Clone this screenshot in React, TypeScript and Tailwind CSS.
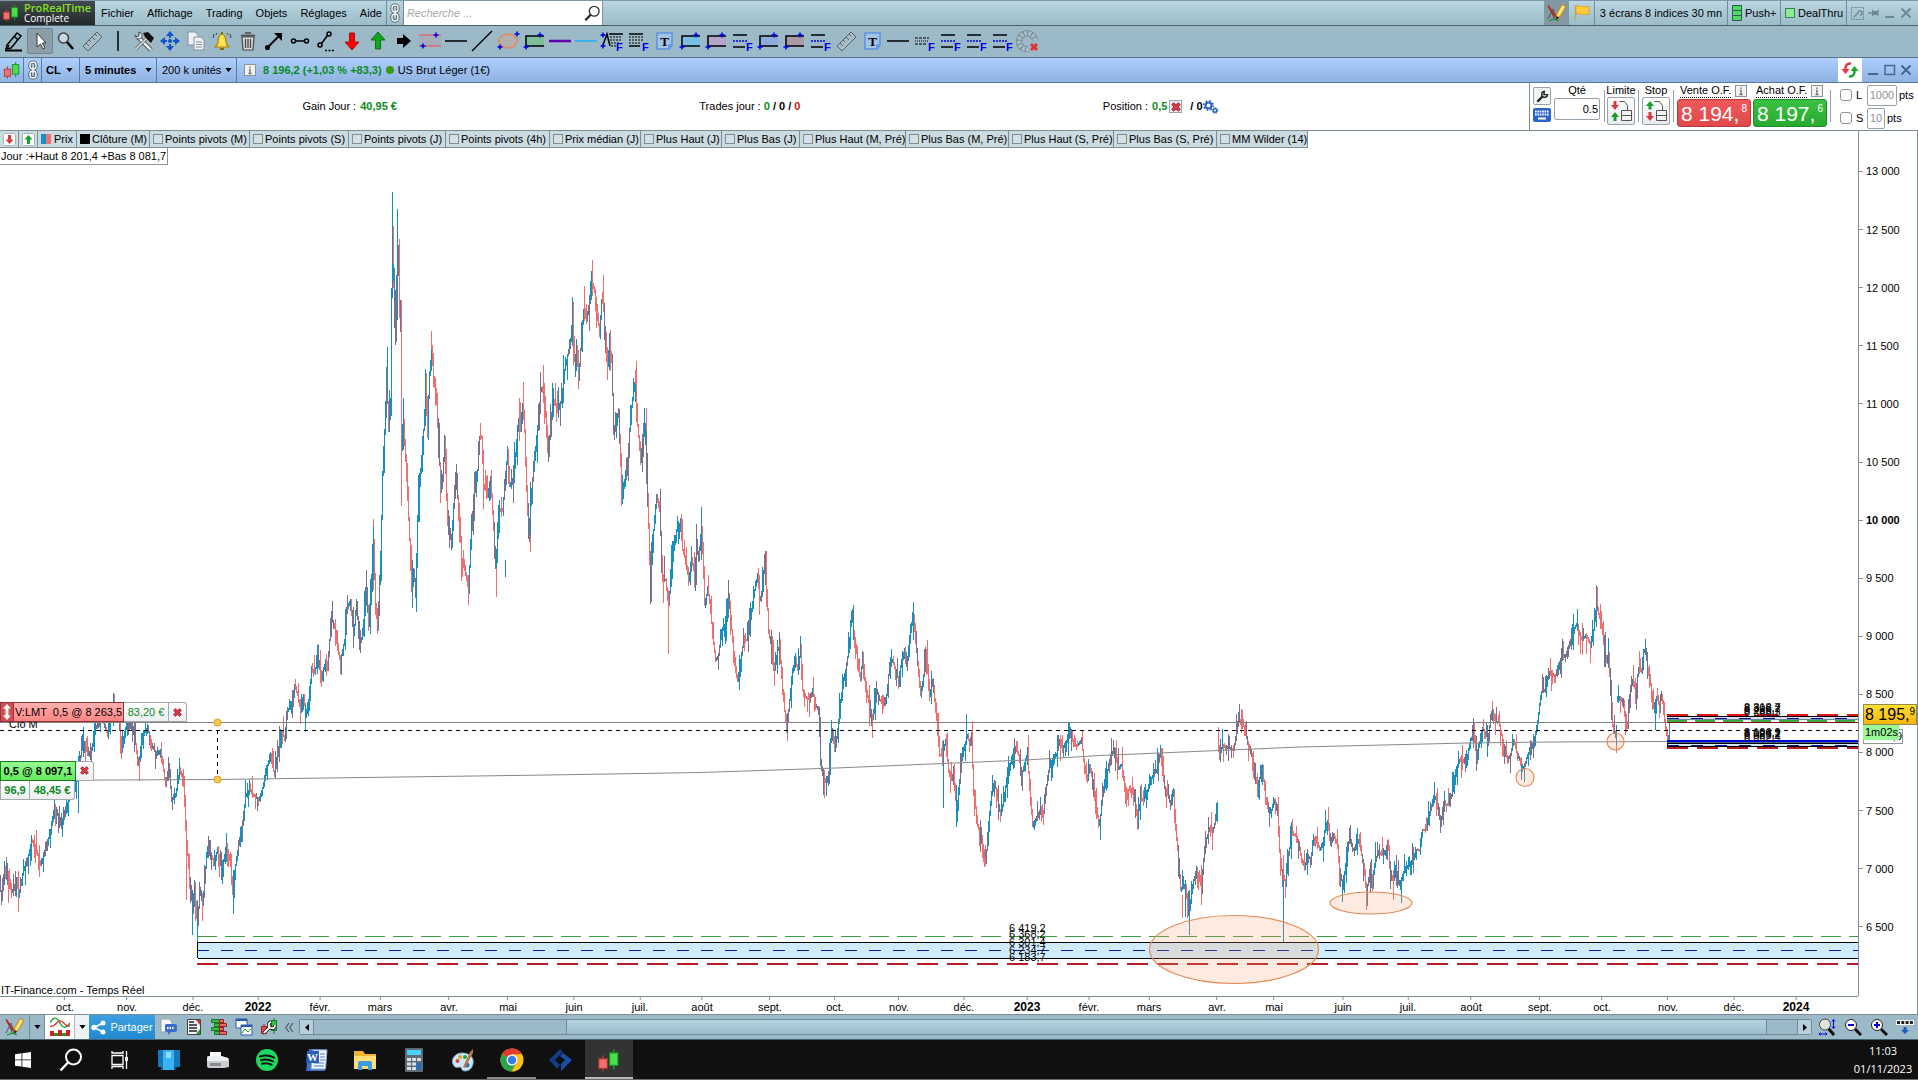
import React from "react";

/* ---------- price data: swing points in chart coordinates ---------- */
const SWINGS: number[][] = [
  [0,885,2,897,5,870,9,885,13,892,17,878,19,895,24,870,28,860,32,840,36,847,41,865,46,850,51,830,55,805,60,822,64,818,68,808,72,780,75,790,79,770,82,750,85,742,88,755,92,750,96,728,99,722,103,720,108,735,114,705,118,712,122,745,127,725,131,720,134,730,139,765,143,735,148,728,152,745,157,755,161,750,166,785,169,765,172,800,176,795,180,770,184,778,186,830,190,880,193,910,195,895,198,925,200,890,203,905,207,855,210,850,214,862,218,850,222,870,227,845,231,865,233,890,236,865,239,845,243,825,246,795,250,790,254,795,259,800,264,785,268,765,271,758,275,775,278,755,280,740,282,732,285,738,288,710,292,705,295,685,298,695,301,712,304,695,306,715,309,700,312,670,315,672,318,660,322,675,326,662,328,670,330,640,332,618,335,628,338,650,341,660,345,640,347,610,351,600,354,635,357,605,360,645,363,635,366,595,369,620,372,590,374,545,376,605,378,625,381,560,383,475,385,430,387,375,389,430,391,400,392,290,394,270,396,340,398,260,399,275,401,330,402,450,404,420,406,460,408,500,410,540,412,590,414,570,416,590,418,520,420,475,422,470,424,430,426,390,428,420,430,375,432,350,434,380,437,400,439,440,441,490,443,480,445,440,447,500,450,535,452,535,456,480,459,505,462,560,465,570,469,585,472,530,475,490,478,470,480,437,482,437,484,485,488,495,491,480,494,530,496,565,500,510,503,510,506,475,508,450,510,485,514,480,517,440,519,420,521,430,523,405,525,430,527,490,529,535,532,490,535,460,538,430,541,390,544,390,547,430,549,455,551,420,554,400,558,410,562,400,565,370,568,355,571,340,573,320,575,360,577,350,579,380,581,350,584,310,587,320,590,300,592,282,595,290,598,315,600,335,602,300,604,305,605,335,608,365,610,345,612,360,614,430,617,420,619,410,622,490,625,480,628,460,631,415,634,390,636,385,638,425,641,460,643,440,646,425,648,500,651,580,654,530,657,495,660,510,663,580,666,580,669,605,671,580,674,550,677,530,681,523,683,550,686,560,689,580,692,560,695,575,697,545,699,560,701,535,703,550,705,605,708,590,710,600,713,635,716,660,719,655,722,630,726,625,729,595,732,630,735,665,738,680,741,660,744,640,747,640,749,630,752,610,755,590,758,575,760,600,762,595,765,562,767,590,769,630,772,650,775,670,778,650,780,650,783,690,787,732,790,700,793,670,796,660,798,670,801,650,803,690,806,697,810,700,813,690,816,705,819,710,821,760,823,775,826,782,829,775,831,740,833,730,835,750,838,730,841,700,844,680,847,665,850,640,852,612,855,640,858,660,861,680,863,655,866,690,869,700,872,725,874,710,877,690,880,700,884,705,887,695,890,665,893,660,896,670,899,680,902,660,905,650,908,660,911,625,914,620,917,650,919,675,921,695,924,675,926,650,928,665,930,695,933,680,936,710,938,730,940,755,943,755,946,740,949,770,952,780,954,770,957,815,959,790,962,760,965,745,968,735,970,745,972,745,974,790,978,825,982,840,985,855,987,850,989,825,992,795,995,782,998,800,1001,815,1004,800,1007,780,1010,765,1013,760,1016,748,1019,755,1022,775,1026,760,1028,755,1030,790,1033,825,1036,820,1038,815,1041,810,1044,812,1047,785,1050,765,1053,760,1057,755,1060,740,1063,750,1066,742,1068,740,1071,730,1074,745,1078,745,1082,740,1085,770,1088,780,1090,765,1093,780,1096,800,1099,825,1101,815,1103,795,1106,775,1110,765,1112,755,1115,750,1119,768,1122,765,1126,790,1129,790,1132,790,1135,800,1138,815,1141,800,1144,800,1148,790,1151,780,1154,775,1157,770,1161,752,1163,765,1165,788,1168,792,1171,805,1174,790,1176,830,1179,860,1181,890,1184,885,1187,895,1189,915,1191,900,1194,880,1197,870,1200,880,1202,880,1204,860,1207,838,1210,828,1213,832,1216,820,1217,808],
  [1218,742,1220,753,1223,745,1227,748,1230,748,1234,750,1237,732,1239,720,1243,722,1246,735,1249,745,1252,755,1255,778,1258,785,1261,775,1263,770,1266,800,1269,812,1272,810,1275,800,1278,815,1280,850,1283,880,1286,880,1289,855,1292,835,1296,835,1299,845,1302,860,1305,868,1308,855,1311,860,1314,838,1317,840,1320,850,1323,845,1326,825,1328,822,1331,845,1334,835,1338,845,1340,870,1343,885,1346,865,1348,850,1350,835,1353,850,1356,848,1359,840,1362,855,1365,875,1367,892,1370,872,1373,880,1376,860,1379,852,1383,855,1387,850,1389,850,1391,875,1394,880,1397,872,1400,885,1402,880,1405,870,1409,865,1413,860,1417,850,1420,850,1423,830,1427,830,1430,812,1434,800,1436,797,1439,815,1442,818,1445,805,1449,805,1452,795,1456,770,1460,760,1464,762,1468,755,1471,740,1474,735,1477,755,1480,742,1483,728,1486,735,1489,735,1491,718,1493,710,1496,722,1499,722,1502,735,1505,750,1508,760,1511,755,1514,740,1517,752,1520,760,1522,770,1525,765,1528,755,1532,748,1535,737,1538,722,1540,705,1542,692,1546,690,1549,672,1553,675,1557,675,1560,665,1563,655,1566,655,1569,647,1571,640,1574,630,1577,624,1580,635,1583,640,1586,635,1588,638,1591,645,1594,630,1597,602,1599,614,1602,625,1605,650,1607,662,1609,655,1611,695,1613,725,1616,735],
  [1617,700,1620,697,1623,702,1626,718,1628,728,1630,695,1633,680,1636,692,1639,668,1642,672,1644,650,1646,650,1648,668,1651,685,1654,705,1657,698,1660,705,1662,695,1665,720,1667,735,1669,738],
];

/* single tall wicks: x, high, low, up(1) / down(0) */
const WICKS = [
  [392,192,298,1],[393,226,288,0],[397,209,320,1],[399,239,318,0],[401,300,506,0],[373,519,590,0],[387,347,390,1],[431,331,370,0],
  [412,560,608,1],[487,322,322,1],[496,560,597,0],[468,575,605,0],[505,560,577,1],[519,398,440,0],[543,365,400,0],[530,500,552,0],[573,303,330,0],
  [591,271,300,1],[603,275,312,0],[635,370,400,0],[621,470,506,0],[668,590,654,0],[646,408,430,0],[701,507,560,1],[766,551,580,0],
  [787,715,741,0],[824,770,798,0],[853,605,640,1],[872,715,738,0],[913,602,640,1],[943,740,808,1],[956,785,827,1],[966,714,745,1],[972,721,745,0],
  [985,845,866,0],[1028,735,760,0],[1100,820,840,1],[1182,895,918,0],[1185,880,917,1],[1189,890,935,1],[1217,802,822,1],[1201,870,905,0],
  [1283,880,943,1],[1283,855,882,0],[1285,880,898,0],[1342,880,902,1],[1366,885,905,0],[1393,870,900,0],[1401,880,903,1],[197,900,942,1],[192,890,935,1],
  [233,870,914,1],[186,820,900,0],[78,770,813,1],[114,694,715,0],[139,760,779,0],[305,705,732,1],[1492,701,715,0],[1521,765,780,1],[1524,768,782,1],
  [1577,609,630,1],[1597,587,605,0],[1616,725,745,1],[1645,639,655,1],[1655,700,730,1],[1669,729,741,1],[1487,725,757,1],
];

const noise = (n: number) => {
  const v = Math.sin(n * 127.1 + 311.7) * 43758.5453;
  return v - Math.floor(v);
};

function buildBars() {
  const paths = { up: "", down: "", mixed: "" };
  for (const run of SWINGS) {
    const level = (x: number) => {
      for (let i = 0; i + 3 < run.length; i += 2) {
        if (x <= run[i + 2]) {
          const t = (x - run[i]) / (run[i + 2] - run[i]);
          return run[i + 1] + (run[i + 3] - run[i + 1]) * t;
        }
      }
      return run[run.length - 1];
    };
    const last = run[run.length - 2];
    for (let x = run[0]; x <= last; x++) {
      const a = level(x);
      const b = level(Math.min(x + 1, last));
      const k = x > 365 && x < 700 ? 1.4 : 1;
      const r1 = noise(x);
      const r2 = noise(x + 5000);
      const top = Math.round(Math.min(a, b) - (1 + r1 * r1 * r1 * 17) * k);
      const low = Math.round(Math.max(a, b) + (1 + r2 * r2 * r2 * 17) * k);
      const pick = noise(Math.floor(x / 2) + 900);
      const key = pick < 0.28 ? "mixed" : b < a ? "up" : "down";
      paths[key] += `M${x + 0.5} ${top}V${low}`;
    }
  }
  for (const [x, t, l, up] of WICKS) paths[up ? "up" : "down"] += `M${x + 0.5} ${t}V${l}`;
  return paths;
}
const BARS = buildBars();

/* chart plane: 1858 x 865 units, first row at 131 */
const at = (x: number, y: number) => ({ left: `${(x / 1858) * 100}%`, top: `${((y - 131) / 865) * 100}%` });

/* ---------- small drawings ---------- */
type P = { children?: React.ReactNode };
const Ico = ({ children }: P) => (
  <svg viewBox="0 0 24 24" width="24" height="24" fill="none" stroke="#000" strokeWidth="1.5">{children}</svg>
);
const F = () => (
  <text x="16" y="22" fontSize="11" fontWeight="bold" fill="#0000e6" stroke="none" fontFamily="Liberation Sans, Arial, sans-serif">F</text>
);
const Plus = ({ x, y }: { x: number; y: number }) => <path d={`M${x - 2.5} ${y}h5M${x} ${y - 2.5}v5`} stroke="#0000e6" />;
const Ruler = () => (
  <Ico><path d="M3 17 17 3l5 5L8 22z" fill="#a9bcc6" stroke="#56646c" strokeWidth="1" /><path d="m6 14 3 3m0-6 2 2m1-5 3 3m0-6 2 2" stroke="#56646c" strokeWidth="1" /></Ico>
);
const Zone = ({ fill }: { fill: string }) => (
  <Ico><path d="M4 7h18v10H4z" fill={fill} stroke="none" /><path d="M22 7H4v10h18" /><Plus x={18} y={6} /><Plus x={4} y={18} /></Ico>
);
const Fib = () => (
  <Ico><path d="M3 6h14M3 18h12" /><path d="M3 12h14" stroke="#0000e6" strokeDasharray="2 1" /><F /></Ico>
);
const TextTool = () => (
  <Ico>
    <path d="M5 4h15v12l-3 4H5z" stroke="#5b93e0" fill="#a4c4e6" /><path d="M20 16h-3v4" stroke="#5b93e0" />
    <text x="12.500" y="17" textAnchor="middle" fontSize="13" fontWeight="bold" fill="#000" stroke="none" fontFamily="Liberation Serif, serif">T</text>
  </Ico>
);
const Candles = ({ s = 20 }: { s?: number }) => (
  <svg viewBox="0 0 20 20" width={s} height={s}>
    <path d="M14 1v17" stroke="#1c9a2a" strokeWidth="1.200" /><path d="M5 6v13.500" stroke="#b83a3a" strokeWidth="1.200" />
    <rect x="1.500" y="9" width="7" height="8" fill="#f07070" stroke="#a83a3a" /><rect x="10.500" y="4" width="7" height="10.500" fill="#4be04b" stroke="#1c8a2a" />
  </svg>
);
const Chain = () => (
  <svg viewBox="0 0 12 20" width="12" height="20" fill="none">
    <g stroke="#4b555b" strokeWidth="3.200"><rect x="3" y="2" width="6" height="7" rx="3" /><rect x="3" y="11" width="6" height="7" rx="3" /><path d="M6 6v8" /></g>
    <g stroke="#f4f7f8" strokeWidth="1.500"><rect x="3" y="2" width="6" height="7" rx="3" /><rect x="3" y="11" width="6" height="7" rx="3" /><path d="M6 6v8" /></g>
  </svg>
);
const Caret = () => <svg viewBox="0 0 8 5" width="7" height="4"><path d="M0 0h8L4 5z" fill="#000" /></svg>;
const PencilChart = () => (
  <svg viewBox="0 0 20 20" width="20" height="20" fill="none">
    <path d="M1 2 8 17M1 16l5-10 4 11" stroke="#4a5a60" strokeWidth="1" /><path d="m1.500 3 7 11" stroke="#d01818" strokeWidth="1.500" /><path d="m2 18 5-2 5 2" stroke="#1a9a2a" strokeWidth="1.200" />
    <path d="m9 16.500.5-5.500L15 1.500l4 2L13.500 13z" fill="#f8d04a" stroke="#b08018" strokeWidth=".8" /><path d="m11.500 12 5-9" stroke="#fff0a8" strokeWidth="1.200" /><path d="m9 17 .4-4 2.800 1.600z" fill="#222" />
  </svg>
);
const Cross = ({ s = 9 }: { s?: number }) => (
  <svg viewBox="0 0 10 10" width={s} height={s}><path d="m1.500 1.500 7 7m0-7-7 7" stroke="#8c1f28" strokeWidth="3.600" /><path d="m1.500 1.500 7 7m0-7-7 7" stroke="#d83c46" strokeWidth="2.400" /></svg>
);
const Info = () => (
  <svg viewBox="0 0 12 12" width="12" height="12"><rect x=".5" y=".5" width="11" height="11" fill="#f2f2ee" stroke="#8b9499" /><path d="M6 5v4M6 2.500v1.500M4.500 9.500h3M5 5.500h1" stroke="#6b7276" strokeWidth="1.300" /></svg>
);
const Wrench = () => (
  <svg viewBox="0 0 14 14" width="13" height="13" fill="none"><path d="M1.500 12.500 7 7" stroke="#222" strokeWidth="2.500" /><path d="M12.500 5A3.200 3.200 0 1 1 9 1.500L8.500 5z" stroke="#222" strokeWidth="1.500" /></svg>
);
const CloseX = ({ c }: { c: string }) => (
  <svg viewBox="0 0 12 12" width="12" height="12"><path d="m1.500 1.500 9 9m0-9-9 9" stroke={c} strokeWidth="2" /></svg>
);

const TOOLS: [string, React.ReactNode][] = [
  ["Dessiner", <Ico><path d="M5 16 15 4l4 3L9 19l-5 1z" /><path d="m12 7 4 4M5 20l2-4" /><path d="M3 21.500h17" strokeWidth="2" /></Ico>],
  ["Sélection", <Ico><path d="M9 4v14l3.500-3 2.500 5 2-1-2.500-5H18z" fill="#fff" stroke="#333" strokeWidth="1" /></Ico>],
  ["Loupe", <Ico><circle cx="9.500" cy="9" r="5" fill="#c7dae2" stroke="#444" /><path d="m13 13 6 7" strokeWidth="2.500" /></Ico>],
  ["Règle", <Ruler />],
  ["Séparateur", <Ico><path d="M12 2v20" /></Ico>],
  ["Outils", <Ico><path d="m6 8 13 13" stroke="#444" strokeWidth="4.500" /><path d="m6 8 13 13" stroke="#eef1f3" strokeWidth="2.500" /><path d="M3 6c0 4 4 5 6 3s1-5-2-6v4L5 8z" fill="#eef1f3" stroke="#444" strokeWidth="1" /><path d="M15 9 4 20" strokeWidth="3" stroke="#666" /><path d="M15 9 4 20" strokeWidth="1.500" stroke="#dfe4e6" /><path d="m11 4 5-1 6 6-3 5-6-6z" fill="#111" stroke="none" /></Ico>],
  ["Déplacer", <Ico><g fill="#0f55c8" stroke="none"><path d="m12 2 4 5H8zM12 22l4-5H8zM2 12l5-4v8zM22 12l-5-4v8z" /><circle cx="12" cy="12" r="2" /><path d="M11 7h2v2h-2zM11 15h2v2h-2zM7 11h2v2H7zM15 11h2v2h-2z" /></g></Ico>],
  ["Copier", <Ico><g fill="#eef2f5" stroke="#8492a2" strokeWidth="1"><path d="M4 3h7l3 3v10H4z" /><path d="M10 8h7l3 3v10H10z" /><path d="M12 13h6M12 15.500h6M12 18h6" /></g></Ico>],
  ["Alerte", <Ico><path d="M7 16c2-3 0-10 5-11 5 1 3 8 5 11l2 2H5z" fill="#ffe34a" stroke="#a88400" strokeWidth="1.200" /><path d="M10 20h4M12 5V3" stroke="#8a6c00" strokeWidth="2" /><path d="M4 5 3 9M20 5l1 4M7 4 6 6M17 4l1 2" stroke="#444" strokeWidth="1" /></Ico>],
  ["Supprimer", <Ico><path d="m6 8 1 13h10l1-13z" fill="#d5d8d5" stroke="#444" strokeWidth="1.200" /><path d="M5 6.500h14M9 4h6M9.500 10v9M12 10v9M14.500 10v9" stroke="#444" strokeWidth="1.300" /></Ico>],
  ["Flèche", <Ico><path d="m5 19 11-11" strokeWidth="2" /><path d="M20 4v8l-8-8z" fill="#000" stroke="none" /><circle cx="5.500" cy="18.500" r="1.800" fill="#000" /></Ico>],
  ["Segment", <Ico><circle cx="5.500" cy="12" r="2" /><circle cx="18.500" cy="12" r="2" /><path d="M7.500 12h9" /></Ico>],
  ["Segment oblique", <Ico><circle cx="6" cy="16" r="2" /><circle cx="15" cy="5" r="2" /><path d="m7.500 14.500 6-8" /><path d="M11 21.500h10" strokeDasharray="2 1.500" /></Ico>],
  ["Flèche rouge", <Ico><path d="M9.500 4h5v9H19l-7 8-7-8h4.500z" fill="#f00" stroke="#900" strokeWidth=".8" /></Ico>],
  ["Flèche verte", <Ico><path d="M9.500 20h5v-9H19l-7-8-7 8h4.500z" fill="#10a818" stroke="#075a0c" strokeWidth=".8" /></Ico>],
  ["Flèche noire", <Ico><path d="M5 9v6h6v4l8-7-8-7v4z" fill="#000" stroke="none" /></Ico>],
  ["Canal", <Ico><path d="M1 6h22v11H1z" fill="#a5adb8" stroke="none" /><path d="M1 6h22M1 17h22" stroke="#d86c70" /><Plus x={18} y={6} /><Plus x={5} y={17} /></Ico>],
  ["Horizontale", <Ico><path d="M1 12h22" /></Ico>],
  ["Droite", <Ico><path d="M2 22 22 2" /></Ico>],
  ["Ellipse", <Ico><ellipse cx="12" cy="12" rx="9" ry="7" fill="#b5b0ae" stroke="#e0895c" /><Plus x={21} y={5} /><Plus x={4} y={18} /></Ico>],
  ["Rectangle vert", <Zone fill="#7ebd9c" />],
  ["Ligne violette", <Ico><path d="M1 12h22" stroke="#6000a8" strokeWidth="2.500" /></Ico>],
  ["Ligne bleue", <Ico><path d="M1 12h22" stroke="#3cb0ec" strokeWidth="2" /></Ico>],
  ["Fourchette", <Ico><path d="M3 16 7 5l3 12" /><path d="M9 5h14" /><path d="M10 8h12M10 11h12M11 14h8M11 17h5" strokeWidth="1" strokeDasharray="2 1" /><Plus x={3} y={6} /><Plus x={3} y={17} /><F /></Ico>],
  ["Retracement", <Ico><path d="M3 5h14" /><path d="M3 8h14M3 11h14M3 14h12" strokeWidth="1" strokeDasharray="2 1" /><path d="M3 17h11" /><F /></Ico>],
  ["Texte", <TextTool />],
  ["Zone bleue", <Zone fill="#79bfe0" />],
  ["Zone mauve", <Zone fill="#b6a5c8" />],
  ["Fibonacci 1", <Fib />],
  ["Zone lavande", <Zone fill="#8facdd" />],
  ["Zone rose", <Zone fill="#aa9aa8" />],
  ["Fibonacci 2", <Fib />],
  ["Règle 2", <Ruler />],
  ["Texte 2", <TextTool />],
  ["Horizontale 2", <Ico><path d="M1 12h22" /></Ico>],
  ["Niveaux", <Ico><path d="M3 9h14M3 15h12" strokeWidth="1" strokeDasharray="3 1" /><path d="M3 12h14" strokeWidth="1" strokeDasharray="1 1" /><F /></Ico>],
  ["Fibonacci 3", <Fib />],
  ["Fibonacci 4", <Fib />],
  ["Fibonacci 5", <Fib />],
  ["Désactiver l'aimant", <Ico><path d="M13 20a8 8 0 1 1 6-9" stroke="#6f858f" strokeWidth="6" /><path d="M13 20a8 8 0 1 1 6-9" stroke="#a9c0ca" strokeWidth="4.500" strokeDasharray="3 1" /><path d="m15 15 6 6m0-6-6 6" stroke="#e03434" strokeWidth="3" /></Ico>],
];

const LEGEND = ["Points pivots (M)", "Points pivots (S)", "Points pivots (J)", "Points pivots (4h)", "Prix médian (J)", "Plus Haut (J)", "Plus Bas (J)", "Plus Haut (M, Pré)", "Plus Bas (M, Pré)", "Plus Haut (S, Pré)", "Plus Bas (S, Pré)", "MM Wilder (14)"];
const LEGEND_W = ["w-[100px]", "w-[99px]", "w-[97px]", "w-[104px]", "w-[91px]", "w-[81px]", "w-[78px]", "w-[106px]", "w-[103px]", "w-[105px]", "w-[103px]", "w-[90px]"];

const MONTHS: [number, string][] = [[65,"oct."],[127,"nov."],[193,"déc."],[258,"2022"],[320,"févr."],[380,"mars"],[449,"avr."],[508,"mai"],[574,"juin"],[640,"juil."],[702,"août"],[770,"sept."],[835,"oct."],[899,"nov."],[964,"déc."],[1027,"2023"],[1089,"févr."],[1149,"mars"],[1217,"avr."],[1274,"mai"],[1343,"juin"],[1408,"juil."],[1471,"août"],[1540,"sept."],[1602,"oct."],[1668,"nov."],[1734,"déc."],[1796,"2024"]];
const PRICES = ["13 000","12 500","12 000","11 500","11 000","10 500","10 000","9 500","9 000","8 500","8 000","7 500","7 000","6 500"];

/* ---------- bars at the top ---------- */
function TitleBar() {
  const win = "#6f8892";
  return (
    <header className="flex h-[26px] shrink-0 items-stretch border-t border-b border-t-[#7d99a5] border-b-[#46606c] bg-linear-to-b from-[#b9d6e2] to-[#9cbcc8]">
      <div className="flex w-[95px] items-center gap-1 bg-linear-to-b from-[#444a4e] to-[#23282b] pl-[2px]">
        <Candles s={18} />
        <div className="font-['Open_Sans',sans-serif] text-[11px] leading-[11px]">
          <div className="font-semibold text-[#86e025]">ProRealTime</div>
          <div className="text-[10px] text-white">Complete</div>
        </div>
      </div>
      <nav className="flex items-center gap-[13px] pr-[9px] pl-1.5">
        {["Fichier", "Affichage", "Trading", "Objets", "Réglages", "Aide"].map((m) => <button key={m} className="text-[11px]">{m}</button>)}
      </nav>
      <button aria-label="Lier" className="-ml-[5px] flex w-[18px] items-center justify-center border-x border-[#6f8c98]"><Chain /></button>
      <div className="flex w-[199px] items-center border-r border-[#7792a0] bg-white pr-[2px] pl-[3px]">
        <input aria-label="Recherche" placeholder="Recherche ..." className="min-w-0 flex-1 text-[11px] italic outline-none placeholder:text-[#a8a8a8]" />
        <svg viewBox="0 0 18 18" width="16" height="17" fill="none"><circle cx="11.500" cy="6.500" r="5.500" stroke="#333" strokeWidth="1.500" /><path d="M7.500 10.500 1.500 16.500" stroke="#222" strokeWidth="2.500" /></svg>
      </div>
      <div className="flex-1" />
      <button aria-label="Graphiques" className="flex w-[25px] items-center justify-center bg-[#8598a1]"><PencilChart /></button>
      <button aria-label="Drapeau" className="flex w-[26px] items-center justify-center border-r border-[#6f8c98]">
        <svg viewBox="0 0 18 18" width="18" height="18"><path d="M2.500 1v16" stroke="#b5a878" strokeWidth="1.500" /><path d="M3 2c4-1 6 2 13 0v8c-6 2-9-1-13 0z" fill="#ffcb3a" stroke="#d79a10" strokeWidth=".7" /></svg>
      </button>
      <button className="w-[133px] border-r border-[#6f8c98] text-center text-[11px]">3 écrans 8 indices 30 mn</button>
      <button className="flex w-[53px] items-center gap-[3px] border-r border-[#6f8c98] pl-1 text-[11px]">
        <svg viewBox="0 0 10 16" width="10" height="16"><path d="M.5.5h9v15h-9zM.5 5.500h9M.5 10.500h9" fill="#4fd95e" stroke="#2c5a5c" /></svg>Push+
      </button>
      <button className="flex w-[66px] items-center gap-[3px] border-r border-[#6f8c98] pl-1 text-[11px]"><span className="size-[10px] border border-[#3f7d5c] bg-[#8bec95]" />DealThru</button>
      <div className="flex w-[71px] items-center gap-1 pl-1">
        <svg viewBox="0 0 13 13" width="13" height="13" fill="none" stroke={win}><path d="M.5.5h12v12H.5z" strokeDasharray="2 1" /><path d="m3 10 4-4a2 2 0 1 1 2 2" strokeWidth="1.500" /></svg>
        <svg viewBox="0 0 12 10" width="12" height="10"><path d="M0 5h5" stroke={win} strokeWidth="1.500" /><path d="M4 1.500 6 3h3l1.500-2v8L9 7H6L4 8.500z" fill={win} /></svg>
        <svg viewBox="0 0 12 12" width="12" height="12"><path d="M1 10h9" stroke={win} strokeWidth="2" /></svg>
        <button aria-label="Fermer"><CloseX c={win} /></button>
      </div>
    </header>
  );
}

const Sep = () => <span className="w-px self-stretch bg-[#587ca8]" />;

function ChartBar() {
  return (
    <div className="flex h-[26px] shrink-0 items-center border-t border-b border-t-[#57748f] border-b-[#577aa6] bg-linear-to-b from-[#adcfff] to-[#8fb2e0] text-[11px]">
      <span className="flex w-[23px] justify-center"><Candles s={18} /></span><Sep />
      <span className="flex w-[17px] justify-center"><Chain /></span><Sep />
      <button className="flex w-[37px] items-center justify-between pr-1.5 pl-1 font-bold">CL <Caret /></button><Sep />
      <button className="flex w-[76px] items-center justify-between pr-1 pl-[5px] font-bold">5 minutes <Caret /></button><Sep />
      <button className="flex w-[79px] items-center justify-between pr-1 pl-[5px]">200 k unités <Caret /></button><Sep />
      <span className="ml-[7px]"><Info /></span>
      <span className="ml-[7px] font-bold text-[#0a8a1c]">8 196,2 (+1,03 % +83,3)</span>
      <span className="ml-[4px] size-2 rounded-full bg-[#3f9a12]" />
      <span className="ml-1">US Brut Léger (1€)</span>
      <div className="flex-1" />
      <button aria-label="Actualiser" className="flex w-6 items-center justify-center self-stretch bg-white">
        <svg viewBox="0 0 18 18" width="18" height="18" fill="none" strokeWidth="2.500"><path d="M10 2.500C6 2 4 5 4.500 9" stroke="#e0393e" /><path d="m.5 8 4 5 4-5z" fill="#e0393e" /><path d="M8 15.500c4 .5 6-2.500 5.500-6.500" stroke="#17a82a" /><path d="m9.500 10 4-5 4 5z" fill="#17a82a" /></svg>
      </button>
      <div className="flex w-14 items-center gap-[4px] pl-1.5">
        <svg viewBox="0 0 12 12" width="12" height="12"><path d="M0 10h10" stroke="#46688f" strokeWidth="2" /></svg>
        <svg viewBox="0 0 12 12" width="12" height="12"><path d="M1 1.500h9.500v9H1z" fill="none" stroke="#46688f" strokeWidth="1.500" /></svg>
        <CloseX c="#46688f" />
      </div>
    </div>
  );
}

function StopPanel({ label, swap }: { label: string; swap?: boolean }) {
  const [a, b] = swap ? ["#17a02a", "#d83a40"] : ["#d83a40", "#17a02a"];
  return (
    <div className="flex w-[28px] flex-col items-center">
      <span className="leading-[14px]">{label}</span>
      <button aria-label={label} className="rounded-[2px] border border-[#98a2aa] bg-linear-to-b from-white to-[#e8ebee]">
        <svg viewBox="0 0 26 26" width="26" height="26" fill="none">
          <path d="M11.500 3.500h5l3 4v6" stroke="#555" /><path d="M13.500 12.500h10v10h-10zM13.500 17.500h10" stroke="#555" fill="#f4f4f4" />
          <path d={swap ? "m7 3 4 5H8.500v3.500h-3V8H3z" : "m7 12 4-5H8.500V3h-3v4H3z"} fill={a} />
          <path d={swap ? "m7 23 4-5H8.500v-4h-3v4H3z" : "m7 14 4 5H8.500v4h-3v-4H3z"} fill={b} />
        </svg>
      </button>
    </div>
  );
}

function Deal({ label, big, small, tone }: { label: string; big: string; small: string; tone: string }) {
  return (
    <div className="flex w-[74px] flex-col">
      <div className="flex items-center justify-between pr-1 pl-[3px] leading-[14px]"><span className="border-b border-dotted border-black">{label}</span><Info /></div>
      <button className={`mt-px flex h-7 items-start justify-between rounded-[3px] border px-[3px] text-white ${tone}`}>
        <span className="text-[21px] leading-[27px]">{big}</span><span className="text-[10px] leading-[18px]">{small}</span>
      </button>
    </div>
  );
}

function TradingStrip() {
  return (
    <div className="flex h-[48px] shrink-0 border-b border-[#7d8f95] bg-white text-[11px]">
      <div className="flex flex-1 items-center justify-evenly pr-2">
        <span>Gain Jour : <b className="ml-px text-[#0a8a1c]">40,95 €</b></span>
        <span>Trades jour : <b><span className="text-[#0a8a1c]">0</span> / 0 / <span className="text-[#c01818]">0</span></b></span>
        <span className="flex items-center">Position :<b className="ml-1 text-[#0a8a1c]">0,5</b>
          <button aria-label="Clore la position" className="ml-[2px] flex size-[13px] items-center justify-center border border-[#9aa4aa] bg-[#eef0f2]"><Cross s={10} /></button>
          <b className="ml-2">/ 0</b>
          <svg viewBox="0 0 16 14" width="16" height="14" fill="none" stroke="#2a62b8"><circle cx="5.500" cy="5.500" r="3" strokeWidth="2" /><circle cx="5.500" cy="5.500" r="4.700" strokeWidth="1.500" strokeDasharray="1.800 1.900" /><circle cx="12" cy="10.500" r="1.800" strokeWidth="1.400" /><circle cx="12" cy="10.500" r="2.900" strokeWidth="1" strokeDasharray="1.100 1.200" /></svg>
        </span>
      </div>
      <div className="flex border-l border-[#7d8f95] pl-[3px]">
        <div className="flex w-[18px] flex-col gap-[3px] pt-1">
          <button aria-label="Réglages du trading" className="flex h-[18px] w-[18px] items-center justify-center rounded-[2px] border border-[#98a2aa] bg-[#f4f5f6]"><Wrench /></button>
          <button aria-label="Clavier"><svg viewBox="0 0 18 14" width="18" height="14"><rect width="18" height="14" rx="2" fill="#2a63d0" /><path d="M2 3.500h14M2 6.500h14" stroke="#fff" strokeWidth="2" strokeDasharray="1.600 .8" /><path d="M5 10.500h8" stroke="#fff" strokeWidth="2" /></svg></button>
        </div>
        <label className="ml-[3px] flex w-[46px] flex-col items-center leading-[14px]">Qté
          <input defaultValue="0.5" className="mt-px h-[22px] w-full rounded-[2px] border border-[#98a2aa] pr-px text-right outline-none" />
        </label>
        <span className="ml-[4px] mt-[7px] h-8 w-px bg-[#98a2aa]" /><div className="ml-[2px] flex"><StopPanel label="Limite" /></div>
        <span className="ml-[3px] mt-[7px] h-8 w-px bg-[#98a2aa]" /><div className="ml-[3px] flex"><StopPanel label="Stop" swap /></div>
        <span className="ml-[3px] mt-[7px] h-8 w-px bg-[#98a2aa]" />
        <div className="ml-[3px] flex gap-[2px]">
          <Deal label="Vente O.F." big="8 194," small="8" tone="border-[#b83a3e] bg-linear-to-b from-[#ec5a5c] to-[#e2484b]" />
          <Deal label="Achat O.F." big="8 197," small="6" tone="border-[#1f8c2a] bg-linear-to-b from-[#3cc044] to-[#25ab2e]" />
        </div>
        <span className="ml-[3px] mt-[7px] h-8 w-px bg-[#98a2aa]" />
        <div className="ml-[9px] flex w-[78px] flex-col gap-px pt-px">
          {[["L", "1000", "w-[30px]"], ["S", "10", "w-[18px]"]].map(([n, v, w]) => (
            <div key={n} className="flex h-[22px] items-center">
              <label className="flex w-[27px] items-center gap-1"><input type="checkbox" className="size-3 appearance-none rounded-[3px] border border-[#8a949a] bg-white" />{n}</label>
              <input aria-label={`${n} points`} defaultValue={v} className={`h-[21px] rounded-[2px] border border-[#98a2aa] text-center text-[#8c9296] outline-none ${w}`} />
              <span className="ml-[2px]">pts</span>
            </div>
          ))}
        </div>
      </div>
    </div>
  );
}

/* ---------- chart ---------- */
function ChartCanvas() {
  return (
    <svg className="absolute inset-0 h-full w-full" viewBox="0 131 1858 865" preserveAspectRatio="none" fill="none">
      <rect x="197" y="943" width="1661" height="15" fill="#d0edfd" />
      <g shapeRendering="crispEdges">
        <path d={BARS.mixed} stroke="#76718f" /><path d={BARS.down} stroke="#f06e6e" /><path d={BARS.up} stroke="#168fbd" />
        <path d="M197.500 958V942.500H1858M197.500 958.500H1858" stroke="#000" />
        <path d="M197 936.500H1858" stroke="#3f9a48" strokeDasharray="20 8" />
        <path d="M197 950.500H1858" stroke="#10109a" strokeDasharray="12 12" />
        <path d="M197 964H1858" stroke="#b41e24" strokeWidth="2" strokeDasharray="21 9" />
        <path d="M0 722.500H1668" stroke="#808080" />
        <path d="M0 730.500H1858" stroke="#000" strokeDasharray="4 4" />
        <path d="M217.500 730V776" stroke="#000" strokeDasharray="4 4" />
        <path d="M1667 715H1858" stroke="#e01414" strokeWidth="2" strokeDasharray="21 9" />
        <path d="M1667.500 722V716.500H1858" stroke="#000" />
        <path d="M1667 718H1858" stroke="#e6d9ee" strokeWidth="2" />
        <path d="M1667 718.500H1858" stroke="#10109a" strokeDasharray="12 12" />
        <path d="M1667 719.500H1858" stroke="#5f8f9a" />
        <path d="M1667 721H1858" stroke="#3fa83f" strokeWidth="2" strokeDasharray="20 8" />
        <path d="M1667 722.500H1858" stroke="#7a1010" />
        <path d="M1667 741H1858" stroke="#0000e6" strokeWidth="2" />
        <path d="M1667 742.500H1858" stroke="#2f6f80" />
        <path d="M1667 744.500H1858" stroke="#d0edfd" strokeWidth="3" />
        <path d="M1667.500 747V743.500H1858M1667 746.500H1858" stroke="#000" />
        <path d="M1667 745.500H1858" stroke="#10109a" strokeDasharray="12 12" />
        <path d="M1667 748H1858" stroke="#b41e24" strokeWidth="2" strokeDasharray="21 9" />
      </g>
      <path d="M0 780.500 217 779.500 400 777 548 775 700 772.500 836 768 1026 760 1100 755.500 1218 750.500 1300 747 1467 743 1550 742 1667 741.500" stroke="#888" />
      <g fill="#f9a06c" fillOpacity=".22" stroke="#e58a58" strokeWidth="1.200">
        <ellipse cx="1234" cy="949.500" rx="84.500" ry="34" /><ellipse cx="1371" cy="903" rx="41" ry="11" /><circle cx="1525" cy="777.500" r="9" /><circle cx="1615.500" cy="741.500" r="8.500" />
      </g>
      <g fill="#fcca4c" stroke="#d89b1c"><circle cx="217.500" cy="722.500" r="3.500" /><circle cx="217.500" cy="779.500" r="3.500" /></g>
    </svg>
  );
}

const Mark = ({ x, y, c, children }: { x: number; y: number; c?: string } & P) => (
  <span className={`absolute -translate-y-1/2 leading-3 whitespace-nowrap ${c ?? ""}`} style={at(x, y)}>{children}</span>
);

function Chart() {
  const tag = "flex items-center justify-center border";
  const plain = "border-[#a3aaae] bg-linear-to-b from-white to-[#eceeef]";
  return (
    <div className="relative min-w-0 flex-1 overflow-hidden text-[11px]">
      <ChartCanvas />
      {[["6 419,2", 928], ["6 368,2", 934], ["6 301,4", 942], ["6 234,7", 950], ["6 183,7", 957]].map(([t, y]) => <Mark key={t} x={1009} y={y as number}>{t}</Mark>)}
      {[["8 318,7", 707], ["8 306,2", 708], ["8 288,7", 710], ["8 268,3", 712]].map(([t, y]) => <Mark key={t} x={1744} y={y as number}>{t}</Mark>)}
      {[["8 106,9", 732], ["8 098,2", 733], ["8 083,7", 735], ["8 062,4", 737]].map(([t, y]) => <Mark key={t} x={1744} y={y as number}>{t}</Mark>)}
      <Mark x={9} y={724}>Clo M</Mark>
      <Mark x={1} y={990}>IT-Finance.com - Temps Réel</Mark>

      <div className="absolute flex h-[20px]" style={at(0, 702)}>
        <div className={`${tag} w-[14px] border-[#983034] bg-[#cf5054]`}>
          <svg viewBox="0 0 10 16" width="10" height="16"><path d="m5 0 4 4.500H6.500v7H9L5 16l-4-4.500h2.500v-7H1z" fill="#fff" /></svg>
        </div>
        <div className={`${tag} w-[110px] border-l-0 border-[#983034] bg-linear-to-b from-[#ffb0b0] to-[#fb8585] whitespace-pre`}>{"V:LMT  0,5 @ 8 263,5"}</div>
        <div className={`${tag} ${plain} w-[45px] border-l-0 text-[#0a8a1c]`}>83,20 €</div>
        <button aria-label="Annuler l'ordre" className={`${tag} ${plain} w-[18px] rounded-tr-[3px] border-l-0`}><Cross /></button>
      </div>
      <div className="absolute" style={at(0, 761)}>
        <div className="flex h-[20px]">
          <div className={`${tag} w-[76px] border-[#1c7a24] bg-linear-to-b from-[#97fb8f] to-[#62ea5c] font-bold whitespace-nowrap`}>0,5 @ 8 097,1</div>
          <button aria-label="Fermer la position" className={`${tag} ${plain} w-[18px] rounded-tr-[3px] border-l-0`}><Cross /></button>
        </div>
        <div className="flex h-[19px] font-bold text-[#0a8a1c]">
          <div className={`${tag} ${plain} w-[30px] border-t-0`}>96,9</div>
          <div className={`${tag} ${plain} w-[45px] rounded-br-[3px] border-t-0 border-l-0`}>48,45 €</div>
        </div>
      </div>

      <div className="relative flex h-[17px] w-max border-r border-b border-[#7d8f95] bg-[#cbdbe2]">
        {["#d83a40", "#17a02a"].map((c, i) => (
          <button key={c} aria-label={i ? "Monter" : "Descendre"} className="flex w-[19px] items-center justify-center border-r border-[#7d8f95]">
            <svg viewBox="0 0 13 13" width="13" height="13"><rect x=".5" y=".5" width="12" height="12" rx="1" fill="#fff" stroke="#a9b3b8" /><path d={i ? "m6.500 2 4 4.500H8V11H5V6.500H2.500z" : "m6.500 11 4-4.500H8V2H5v4.500H2.500z"} fill={c} /></svg>
          </button>
        ))}
        <div className="flex w-[39px] items-center gap-[3px] border-r border-[#7d8f95] pl-[3px]"><span className="flex size-[10px] shrink-0"><i className="w-1/2 bg-[#1690c4]" /><i className="w-1/2 bg-[#f07070]" /></span>Prix</div>
        <div className="flex w-[73px] items-center gap-[2px] border-r border-[#7d8f95] pl-[3px] whitespace-nowrap"><span className="size-[10px] shrink-0 bg-black" />Clôture (M)</div>
        {LEGEND.map((l, i) => (
          <label key={l} className={`flex items-center gap-[2px] pl-[3px] whitespace-nowrap ${i < 11 ? "border-r border-[#7d8f95]" : ""} ${LEGEND_W[i]}`}>
            <input type="checkbox" className="size-[10px] shrink-0 appearance-none border border-[#7f8f96] bg-[#d3e0e6]" />{l}
          </label>
        ))}
      </div>
      <div className="relative flex h-[17px] w-[168px] items-center border-r border-b border-[#8a979c] bg-white pl-px whitespace-nowrap">Jour :+Haut 8 201,4 +Bas 8 081,7</div>
    </div>
  );
}

function PriceAxis() {
  return (
    <div className="relative w-[60px] shrink-0 border-x border-[#7d8f95] text-[11px]">
      {PRICES.map((p, i) => (
        <div key={p} className={`absolute left-0 flex -translate-y-1/2 items-center gap-[3px] leading-3 ${p === "10 000" ? "font-bold" : ""}`} style={{ top: `${((40.5 + i * 58.1) / 865) * 100}%` }}>
          <i className="h-px w-1 bg-[#7d8f95]" />{p}
        </div>
      ))}
      <div className="absolute left-[4px] h-[15px] w-10 border border-[#8a979c] bg-white text-right leading-[13px]" style={{ top: `${(598 / 865) * 100}%` }}>8 100,9</div>
      <div className="absolute left-[4px] flex h-[21px] w-[54px] items-start border border-[#8f8a50] bg-linear-to-b from-[#fde02c] to-[#f8b50e] pl-px" style={{ top: `${(573 / 865) * 100}%` }}>
        <span className="text-[16px] leading-[19px]">8 195,</span><span className="text-[10px] leading-[14px]">9</span>
      </div>
      <div className="absolute left-[4px] h-[15px] w-9 bg-[#98f898] pl-[2px] leading-[15px]" style={{ top: `${(594 / 865) * 100}%` }}>1m02s</div>
    </div>
  );
}

/* ---------- bottom bars ---------- */
function BottomBar() {
  const cell = "flex items-center justify-center self-stretch";
  const glass = (d: string) => (
    <svg viewBox="0 0 18 18" width="18" height="18" fill="none"><path d="m11 11 6 6" stroke="#111" strokeWidth="3" /><circle cx="7" cy="7" r="5.500" fill="#fff" stroke="#222" /><path d={d} stroke="#0000e6" strokeWidth="2" /></svg>
  );
  return (
    <div className="flex h-[26px] shrink-0 items-center border-t border-b border-t-[#7d8f95] border-b-[#46606c] bg-[#9bb9c6]">
      <button aria-label="Dessin" className={`${cell} w-[30px] border-r border-[#6f8c98]`}><PencilChart /></button>
      <button aria-label="Options de dessin" className={`${cell} w-[15px] border-r border-[#6f8c98]`}><Caret /></button>
      <button aria-label="Indicateurs" className={`${cell} w-[29px] bg-white`}>
        <svg viewBox="0 0 20 20" width="20" height="20" fill="none" strokeWidth="1.500"><path d="M0 6c4-7 7-6 10 0s7 5 10 0" stroke="#2aa83a" /><path d="M0 9c5 2 6-5 10-5s5 6 10 5" stroke="#d84040" /><path d="M0 19v-5h4v2h4v-3h4v3h4v-3h4v6z" fill="#d02020" /><path d="M4 19v-3h4v3zM12 19v-3h4v3z" fill="#18a028" /></svg>
      </button>
      <button aria-label="Options des indicateurs" className={`${cell} w-[15px] border-l border-[#b0bcc2] bg-[#eef2f4]`}><Caret /></button>
      <button className={`${cell} w-[66px] gap-1 bg-linear-to-b from-[#3ba0e0] to-[#2289d0] text-[11px] text-white`}>
        <svg viewBox="0 0 15 15" width="15" height="15"><path d="m12 3-9 4.500L12 12" fill="none" stroke="#fff" strokeWidth="1.500" /><circle cx="3" cy="7.500" r="2.700" fill="#fff" /><circle cx="12" cy="3" r="2.500" fill="#fff" /><circle cx="12" cy="12" r="2.500" fill="#fff" /></svg>Partager
      </button>
      <div className="flex items-center gap-[7px] pl-[5px]">
        <svg viewBox="0 0 18 18" width="18" height="18"><path d="M1 1h8l3 3v10H1z" fill="#f4f4f4" stroke="#9aa4aa" /><path d="M6 6h9q2 0 2 2v4q0 2-2 2h-4l-3 3v-3H6q-1 0-1-2V8q0-2 1-2z" fill="#3a6fd0" /><path d="M7 10h7" stroke="#fff" strokeWidth="2" strokeDasharray="1.500 1" /></svg>
        <svg viewBox="0 0 18 18" width="18" height="18"><path d="M2.500 1.500h13v15h-13z" fill="#f4f4f4" stroke="#444" /><path d="M4 4h5M4 7h8M4 10h8M4 13h8" stroke="#222" strokeWidth="1.500" /><path d="M11 2h4v5z" fill="#d03030" /><path d="M15 16h-4l4-5z" fill="#20a030" /></svg>
        <svg viewBox="0 0 18 18" width="18" height="18"><path d="M1.500 1.500h8v3h-8zM4.500 5.500h5v3h-5zM1.500 9.500h8v3h-8zM4.500 13.500h5v3h-5z" fill="#30c040" stroke="#157a22" /><path d="M9.500 1.500h4v3h-4zM9.500 5.500h7v3h-7zM9.500 9.500h4v3h-4zM9.500 13.500h7v3h-7z" fill="#e86a6a" stroke="#952020" /></svg>
        <svg viewBox="0 0 18 18" width="18" height="18"><path d="M1 1h11v9H1z" fill="#fff" stroke="#2a5ab0" /><path d="M1 2h11" stroke="#2a5ab0" strokeWidth="2" /><path d="M6 7h11v10H6z" fill="#fff" stroke="#2a5ab0" /><path d="M6 8h11" stroke="#2a5ab0" strokeWidth="2" /><path d="m7 15 3-4 3 3 3-3" fill="none" stroke="#18a028" /></svg>
        <svg viewBox="0 0 18 18" width="18" height="18"><path d="M4 6v11" stroke="#952020" /><path d="M1.500 8.500h5v7h-5z" fill="#e84a4a" stroke="#952020" /><path d="M14 0v16" stroke="#157a22" /><path d="M11.500 2.500h5v10h-5z" fill="#30c040" stroke="#157a22" /><path d="m4 15 6-6m1-5c-3 1-3 5 0 6s4-1 4-3" stroke="#222" strokeWidth="3.500" fill="none" /><path d="m4 15 6-6m1-5c-3 1-3 5 0 6s4-1 4-3" stroke="#fff" strokeWidth="1.800" fill="none" /></svg>
      </div>
      <svg className="ml-[7px]" viewBox="0 0 9 9" width="9" height="9" fill="none" stroke="#46606c"><path d="M4 0 .8 4.500 4 9M8 0 4.800 4.500 8 9" strokeWidth="1.200" /></svg>
      <div className="ml-[5px] flex h-4 flex-1 items-stretch rounded-[2px] border border-[#6f8c98]">
        <button aria-label="Défiler à gauche" className="flex w-[14px] items-center justify-center border-r border-[#6f8c98] bg-[#b4d0dc]"><svg viewBox="0 0 4 7" width="4" height="7"><path d="M4 0v7L0 3.500z" /></svg></button>
        <div className="relative flex-1"><button aria-label="Barre de défilement" className="absolute inset-y-0 left-[17%] w-[81%] border-x border-[#6f8c98] bg-linear-to-b from-[#b5d3df] to-[#9abccb]" /></div>
        <button aria-label="Défiler à droite" className="flex w-[14px] items-center justify-center border-l border-[#6f8c98] bg-[#b4d0dc]"><svg viewBox="0 0 4 7" width="4" height="7"><path d="M0 0v7l4-3.500z" /></svg></button>
      </div>
      <div className="flex items-center gap-2 pr-1 pl-1.5">
        <button aria-label="Zoom automatique"><svg viewBox="0 0 18 18" width="18" height="18" fill="none"><path d="m10 10 6 7" stroke="#111" strokeWidth="3" /><circle cx="7" cy="6.500" r="5.500" fill="#dfe3e0" stroke="#444" /><path d="M15.500 2v8M14 3.500 15.500 1.500 17 3.500M14 8.500l1.500 2 1.500-2M1 16h8M2.500 14.500 1 16l1.500 1.500M7.500 14.500 9 16l-1.500 1.500" stroke="#0000e6" /></svg></button>
        <button aria-label="Zoom arrière">{glass("M4 7h6")}</button>
        <button aria-label="Zoom avant">{glass("M4 7h6M7 4v6")}</button>
        <button aria-label="Agrandir"><svg viewBox="0 0 18 18" width="18" height="18"><path d="M0 2h18v5H0z" fill="#fff" /><path d="M1 4.500h16" stroke="#222" strokeWidth="3" strokeDasharray="3 1.300" /><path d="M7.500 9h3v3H13l-4 4-4-4h2.500z" fill="#1a5cc0" /></svg></button>
      </div>
    </div>
  );
}

const APPS: [string, React.ReactNode][] = [
  ["Rechercher", <svg viewBox="0 0 24 24" width="24" height="24" fill="none" stroke="#fff"><circle cx="14.500" cy="9" r="7.500" strokeWidth="2" /><path d="M9 14.500 1.500 22.500" strokeWidth="2.500" /></svg>],
  ["Applications actives", <svg viewBox="0 0 18 18" width="18" height="18" fill="none" stroke="#fff" strokeWidth="1.300"><path d="M1 4.500h11v9H1zM1 0v2h11V0M1 18v-2.500h11V18M15.500 0v18" /><path d="M14 6h3v4h-3z" fill="#fff" stroke="none" /></svg>],
  ["Téléphone", <svg viewBox="0 0 24 24" width="24" height="24"><path d="M1 2h22v17H1z" fill="#1577b8" /><path d="M4 19h16l-2 3H4z" fill="#0c5c94" /><path d="M6 2h11v20H6z" fill="#38b4f4" /><path d="M9 4h5v6H9z" fill="#8fdcff" /></svg>],
  ["Imprimante", <svg viewBox="0 0 24 24" width="24" height="24"><path d="M4 4h11v7H4z" fill="#fafafa" /><path d="M1 10q0-2 2-2h12l7 2q1 0 1 2v7l-5 1H3q-2 0-2-2z" fill="#c9ccce" /><path d="M1 10q0-2 2-2h12l7 2v3H1z" fill="#eceeef" /><path d="M4 15h11v3H4z" fill="#888c90" /></svg>],
  ["Spotify", <svg viewBox="0 0 24 24" width="24" height="24" fill="none"><circle cx="12" cy="12" r="11" fill="#1ed760" /><path d="M5 8.500c5-1.500 10-1 14 1.200M6 12.200c4-1.200 8-.8 12 1.200M7 15.700c3.500-.9 6.500-.6 9.500 1" stroke="#111" strokeWidth="2" strokeLinecap="round" /></svg>],
  ["Word", <svg viewBox="0 0 24 24" width="24" height="24"><path d="M5 1h18l-2 22H2z" fill="#3f6fc0" /><path d="M9 2h14l-1.500 19H7z" fill="#f2f6fc" stroke="#8aa8d8" /><path d="M16 6h5M16 9h5M16 12h5M10 15h10M10 18h10" stroke="#4a78c8" /><path d="M3 3h12v12H2z" fill="#2b5fb4" /><text x="3" y="13" fontSize="11" fontWeight="bold" fill="#fff" fontFamily="Liberation Serif, serif">W</text></svg>],
  ["Explorateur", <svg viewBox="0 0 24 24" width="24" height="24"><path d="M1 3h9l2 3h11v15H1z" fill="#f0b432" /><path d="M1 8h22v13H1z" fill="#ffdc78" /><path d="M5 22v-7q0-2 2-2h10q2 0 2 2v7h-4v-4H9v4z" fill="#3c9ce0" /></svg>],
  ["Calculatrice", <svg viewBox="0 0 20 24" width="20" height="24"><rect x="1" width="18" height="24" rx="1" fill="#5f6a74" /><path d="M3 2h14v5H3z" fill="#4ad2ff" /><path d="M3 10h4v3H3zM8 10h4v3H8zM3 14.500h4v3H3zM8 14.500h4v3H8zM3 19h4v3H3zM8 19h4v3H8z" fill="#d8dde2" /><path d="M13 10h4v3h-4z" fill="#d8dde2" /><path d="M13 14.500h4V22h-4z" fill="#1e6fc8" /></svg>],
  ["Paint", <svg viewBox="0 0 24 24" width="24" height="24"><path d="M11 5C4 5 0 11 2 16s5 3 7 3 1 4 5 4c6 0 9-6 8-11s-6-7-11-7z" fill="#cfe6f6" stroke="#7fa8c4" /><circle cx="6.500" cy="13" r="2" fill="#d84a30" /><circle cx="9" cy="9" r="2" fill="#e8a020" /><circle cx="14" cy="9" r="2" fill="#30a050" /><circle cx="16" cy="17" r="2.500" fill="#2870d0" /><path d="m12 19 7-15 3-3v4L14 20z" fill="#b87a40" /></svg>],
  ["Chrome", <svg viewBox="0 0 24 24" width="24" height="24"><circle cx="12" cy="12" r="11.500" fill="#fbc116" /><path d="M12 12 2 6.300A11.500 11.500 0 0 1 22 6.300H12z" fill="#e33b2e" /><path d="M12 12 2 6.300A11.500 11.500 0 0 0 11.500 23.500l5.300-9z" fill="#2ba24c" /><circle cx="12" cy="12" r="5.500" fill="#fff" /><circle cx="12" cy="12" r="4.300" fill="#3b7de8" /></svg>],
  ["Courtier", <svg viewBox="0 0 24 24" width="24" height="24"><path d="m11 1 3 3-8 8 5 5-3 4-8-9z" fill="#143c84" /><path d="m14 5 9 7-11 11v-7l4-4-5-4z" fill="#1b4fa4" /></svg>],
];

function Taskbar() {
  return (
    <footer className="flex h-10 shrink-0 items-stretch border-b border-[#6a6a6a] bg-[#101010]">
      <button aria-label="Démarrer" className="flex w-[46px] items-center justify-center">
        <svg viewBox="0 0 16 16" width="16" height="16" fill="#fff"><path d="m0 2.200 6.500-.9v6.200H0zM7.300 1.200 16 0v7.500H7.300zM0 8.300h6.500v6.300L0 13.700zM7.300 8.300H16V16l-8.700-1.200z" /></svg>
      </button>
      {APPS.map(([n, i]) => <button key={n} aria-label={n} className={`flex w-[49px] items-center justify-center ${n === "Chrome" ? "shadow-[inset_0_-2px_0_0_#8a8a8a]" : ""}`}>{i}</button>)}
      <button aria-label="ProRealTime" className="flex w-[48px] items-center justify-center bg-[#333] shadow-[inset_0_-2px_0_0_#b8b8b8]"><Candles s={24} /></button>
      <div className="flex-1" />
      <div className="flex w-[70px] flex-col items-center justify-center font-['Open_Sans',sans-serif] text-[11px] leading-[18px] text-white"><span>11:03</span><span>01/11/2023</span></div>
    </footer>
  );
}

export default function App() {
  return (
    <div className="flex h-screen min-h-[600px] flex-col overflow-hidden bg-white font-['Liberation_Sans',Arial,sans-serif] text-black">
      <TitleBar />
      <div className="flex h-[31px] shrink-0 items-center bg-[#9bb9c6] pb-[2px] pl-px">
        {TOOLS.map(([n, icon], i) =>
          i === 4 ? <span key={n} className="flex w-[26px] justify-center">{icon}</span> : (
            <button key={n} aria-label={n} className={`flex h-[26px] w-[26px] shrink-0 items-center justify-center ${i === 1 ? "rounded-[2px] border border-[#71868f] bg-[#8c9fa8]" : ""}`}>{icon}</button>
          ))}
      </div>
      <ChartBar />
      <TradingStrip />
      <main className="flex min-h-0 flex-1">
        <Chart />
        <PriceAxis />
      </main>
      <div className="flex h-[18px] shrink-0 border-r border-[#7d8f95] text-[11px]">
        <div className="relative flex-1 border-t border-[#7d8f95]">
          {MONTHS.map(([x, m]) => (
            <div key={x} className={`absolute top-0 flex -translate-x-1/2 flex-col items-center leading-[14px] ${/^\d/.test(m) ? "text-[12px] font-bold" : ""}`} style={{ left: `${(x / 1858) * 100}%` }}>
              <i className="h-[3px] w-px bg-[#7d8f95]" />{m}
            </div>
          ))}
        </div>
        <div className="w-[59px]" />
      </div>
      <BottomBar />
      <Taskbar />
    </div>
  );
}
